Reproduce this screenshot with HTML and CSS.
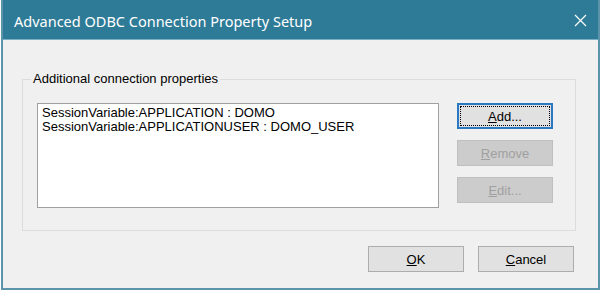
FILE: index.html
```html
<!DOCTYPE html>
<html>
<head>
<meta charset="utf-8">
<link rel="stylesheet" href="styles.css">
</head>
<body>
<div class="window">
  <div class="titlebar">
    <span class="title">Advanced ODBC Connection Property Setup</span>
    <span class="close"><svg width="13" height="13" viewBox="0 0 13 13"><path d="M1 1 L12 12 M12 1 L1 12" stroke="#ffffff" stroke-width="1.2" fill="none"/></svg></span>
  </div>
  <div class="client">
    <fieldset class="group">
      <legend>Additional connection properties</legend>
      <div class="group-body">
        <div class="listbox">
          <div class="item">SessionVariable:APPLICATION : DOMO</div>
          <div class="item">SessionVariable:APPLICATIONUSER : DOMO_USER</div>
        </div>
        <div class="side-buttons">
          <button class="btn default"><span><u>A</u>dd...</span></button>
          <button class="btn" disabled><span><u>R</u>emove</span></button>
          <button class="btn" disabled><span><u>E</u>dit...</span></button>
        </div>
      </div>
    </fieldset>
    <div class="footer">
      <button class="btn"><span><u>O</u>K</span></button>
      <button class="btn"><span><u>C</u>ancel</span></button>
    </div>
  </div>
</div>
</body>
</html>
```
FILE: styles.css
```css
html, body {
  margin: 0;
  padding: 0;
  background: #ffffff;
}

.window {
  margin-left: 1px;
  width: 599px;
  height: 290px;
  box-sizing: border-box;
  border: 2px solid #5b93ab;
  border-top: 0;
  background: #f0f0f0;
  display: flex;
  flex-direction: column;
}

.titlebar {
  height: 40px;
  box-sizing: border-box;
  background: #2e7b97;
  border-bottom: 1px solid #79aec3;
  display: flex;
  align-items: center;
  justify-content: space-between;
  padding: 2px 0 0 11px;
  color: #ffffff;
  font-family: "Noto Sans", "Open Sans", sans-serif;
  font-size: 14.5px;
}

.close {
  width: 36px;
  height: 30px;
  display: flex;
  align-items: center;
  justify-content: center;
}

.close svg {
  display: block;
}

.client {
  padding: 30px 22px 0 19px;
  font-family: "Liberation Sans", Arial, sans-serif;
  font-size: 13px;
  color: #000000;
}

.group {
  margin: 0;
  padding: 15px 22px 22px 14px;
  border: 1px solid #dcdcdc;
  min-width: 0;
}

.group legend {
  margin-left: -6px;
  padding: 0 2px;
  line-height: 18px;
  font-size: 13px;
}

.group-body {
  display: flex;
  gap: 18px;
}

.listbox {
  flex: 1;
  height: 105px;
  box-sizing: border-box;
  border: 1px solid #a0a0a0;
  background: #ffffff;
  padding: 2px 4px;
  line-height: 14px;
}

.item {
  white-space: nowrap;
}

.side-buttons {
  display: flex;
  flex-direction: column;
  gap: 11px;
}

.btn {
  width: 96px;
  height: 26px;
  box-sizing: border-box;
  margin: 0;
  padding: 0;
  border: 1px solid #adadad;
  background: #e1e1e1;
  color: #000000;
  font-family: "Liberation Sans", Arial, sans-serif;
  font-size: 13px;
  display: flex;
  align-items: center;
  justify-content: center;
}

.btn.default {
  border: 2px solid #2a78c2;
  outline: 1px dotted #000000;
  outline-offset: -4px;
}

.btn:disabled {
  background: #cccccc;
  border-color: #bfbfbf;
  color: #a0a0a0;
}

.footer {
  display: flex;
  justify-content: flex-end;
  gap: 14px;
  margin-top: 15px;
  margin-right: 2px;
}
```
